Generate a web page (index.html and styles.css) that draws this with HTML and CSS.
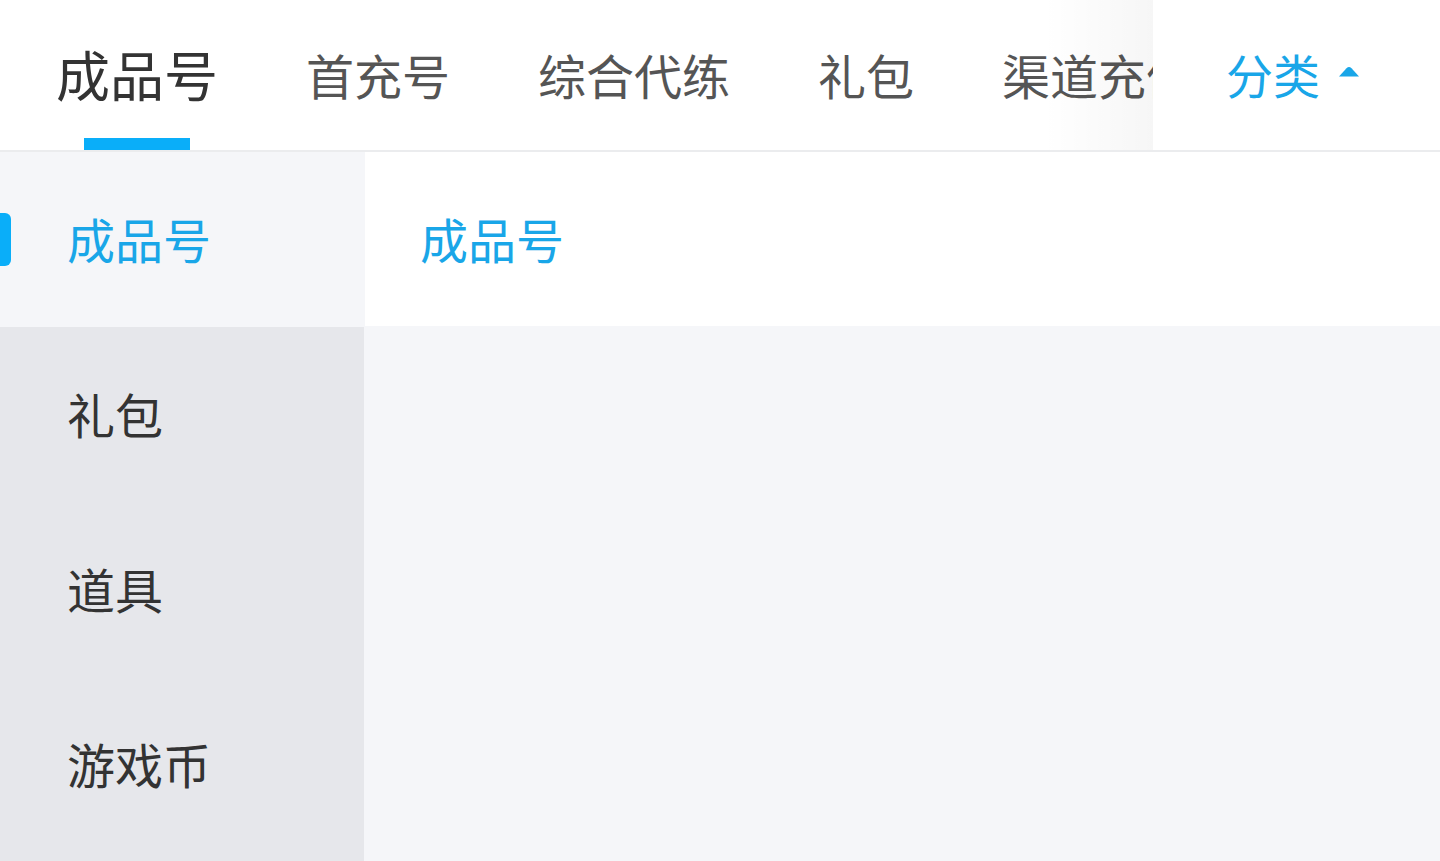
FILE: index.html
```html
<!DOCTYPE html>
<html lang="zh-CN">
<head>
<meta charset="utf-8">
<title>分类</title>
<link rel="stylesheet" href="styles.css">
</head>
<body>
<div class="page">
  <header class="topbar">
    <nav class="tabs">
      <div class="tab active">成品号<span class="indicator"></span></div>
      <div class="tab">首充号</div>
      <div class="tab">综合代练</div>
      <div class="tab">礼包</div>
      <div class="tab">渠道充值</div>
    </nav>
    <div class="category">
      <span class="category-label">分类</span>
      <svg class="caret" width="22" height="11" viewBox="0 0 22 11"><path d="M1 10.5 L8.5 2.2 Q11 -0.4 13.5 2.2 L21 10.5 Z" fill="#19a6e8"/></svg>
    </div>
  </header>
  <main class="body">
    <aside class="sidebar">
      <div class="side-item active"><span class="side-bar"></span>成品号</div>
      <div class="side-item">礼包</div>
      <div class="side-item">道具</div>
      <div class="side-item">游戏币</div>
    </aside>
    <section class="content">
      <div class="content-head">成品号</div>
    </section>
  </main>
</div>
</body>
</html>
```
FILE: styles.css
```css
* { box-sizing: border-box; }
html, body { margin: 0; padding: 0; }
body {
  width: 1440px;
  height: 861px;
  overflow: hidden;
  background: #f5f6f9;
  font-family: "Noto Sans CJK SC", "Noto Sans", sans-serif;
}
.page { display: flex; flex-direction: column; height: 861px; }
.topbar {
  height: 152px;
  flex: none;
  display: flex;
  background: #fff;
  border-bottom: 2px solid #ebecee;
}
.tabs {
  flex: 1;
  display: flex;
  align-items: center;
  gap: 88px;
  padding-left: 56px;
  overflow: hidden;
  white-space: nowrap;
}
.tab {
  position: relative;
  height: 150px;
  display: flex;
  align-items: center;
  font-size: 48px;
  line-height: 1;
  color: #555;
  flex: none;
  padding-bottom: 3px;
}
.tab.active {
  font-size: 54px;
  color: #333;
}
.indicator {
  position: absolute;
  left: 50%;
  bottom: 0;
  width: 106px;
  height: 12px;
  margin-left: -53px;
  background: #0aaef9;
}
.category {
  width: 287px;
  flex: none;
  display: flex;
  align-items: center;
  padding-left: 73px;
  padding-bottom: 3px;
  gap: 18px;
  background: #fff;
  position: relative;
}
.category::before {
  content: "";
  position: absolute;
  right: 100%;
  top: 0;
  bottom: 0;
  width: 110px;
  background: linear-gradient(to left, rgba(0, 0, 0, 0.035), rgba(0, 0, 0, 0));
}
.category-label {
  font-size: 47px;
  line-height: 1;
  color: #19a6e8;
}
.caret { margin-top: -4px; }
.body {
  flex: 1;
  display: flex;
  min-height: 0;
}
.sidebar {
  width: 364px;
  flex: none;
  background: #e6e7eb;
  display: flex;
  flex-direction: column;
}
.side-item {
  position: relative;
  height: 175px;
  display: flex;
  align-items: center;
  padding-left: 67px;
  padding-bottom: 4px;
  font-size: 48px;
  line-height: 1;
  color: #333;
  flex: none;
}
.side-item.active {
  background: #f5f6f9;
  color: #19a6e8;
  width: 365px;
}
.side-bar {
  position: absolute;
  left: 0;
  top: 61px;
  width: 11px;
  height: 53px;
  border-radius: 0 6px 6px 0;
  background: #0aaef9;
}
.content {
  flex: 1;
  background: #f5f6f9;
}
.content-head {
  height: 174px;
  background: #fff;
  display: flex;
  align-items: center;
  padding-left: 56px;
  padding-bottom: 2px;
  font-size: 48px;
  line-height: 1;
  color: #19a6e8;
}
```
